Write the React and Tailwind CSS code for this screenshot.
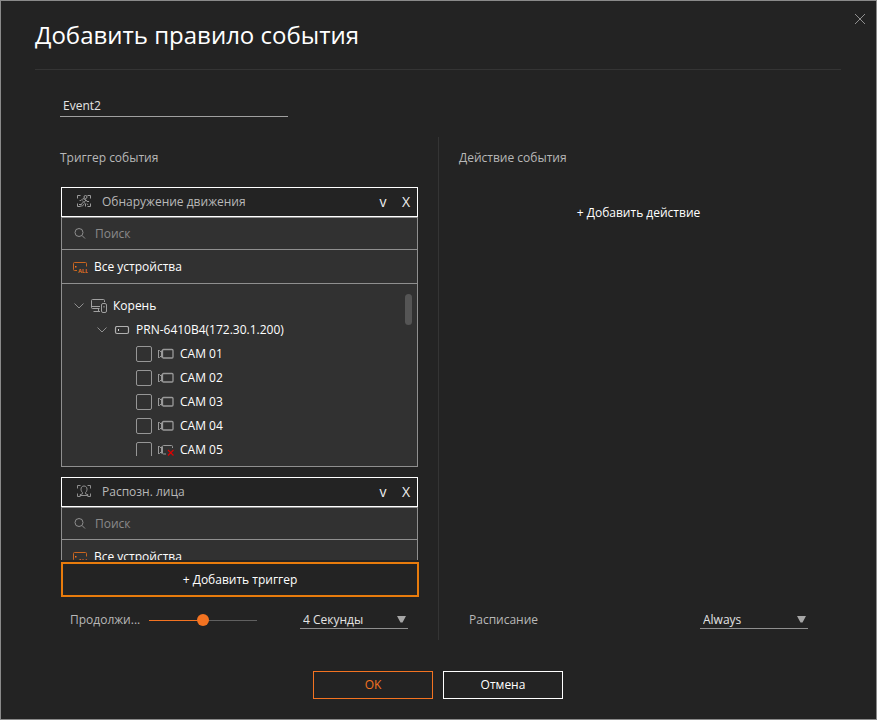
import { useState } from "react";

function CornerFrame() {
  return (
    <path d="M1.5 4.5v-3h3M11.5 1.5h3v3M14.5 9.5v3h-3M4.5 12.5h-3v-3" />
  );
}

function MotionIcon() {
  return (
    <svg className="mb-[2px] h-[14px] w-4 shrink-0" viewBox="0 0 16 14" fill="none" stroke="#9c9c9c" aria-hidden="true">
      <CornerFrame />
      <circle cx="9.500" cy="3" r="1.500" />
      <path d="M5 6.500L7 4.500l3 1.500-2 2.500 1.500 1.500v2.500M6.500 8.500L5.500 10.500H3M10 6l1 1.500h2" />
      <path d="M3.500 6.500h1.500M6.500 6.500L8 8.500M4 12h2.500l1.500-2M11 9.500l1 1.500" strokeWidth="0.8" />
    </svg>
  );
}

function FaceIcon() {
  return (
    <svg className="mb-[2px] h-[14px] w-4 shrink-0" viewBox="0 0 16 14" fill="none" stroke="#8f8f8f" aria-hidden="true">
      <CornerFrame />
      <path d="M6.5 8.6C5.4 7.6 5 6.400 5 5.200 5 3.200 6.200 2 8 2s3 1.200 3 3.200c0 1.200-.4 2.400-1.500 3.400v1.200l2.500.9v.8H4v-.8l2.500-.9z" />
    </svg>
  );
}

function SearchIcon() {
  return (
    <svg className="h-3 w-3 shrink-0" viewBox="0 0 12 12" fill="none" stroke="#8f8f8f" aria-hidden="true">
      <circle cx="5" cy="4.500" r="4" />
      <path d="M8 7.500l3 3" />
    </svg>
  );
}

function AllDevicesIcon() {
  return (
    <svg className="h-3 w-4 shrink-0" viewBox="0 0 16 12" fill="none" stroke="#c9651f" aria-hidden="true">
      <path d="M5 9.500H2.500a1 1 0 0 1-1-1v-6a1 1 0 0 1 1-1h11a1 1 0 0 1 1 1v3" />
      <rect x="3" y="5" width="1.500" height="1.500" fill="#f37321" stroke="none" />
      <text x="6" y="11.500" fontSize="5.500" fontWeight="700" fontFamily="Liberation Sans, sans-serif" fill="#ea7323" stroke="none">
        ALL
      </text>
    </svg>
  );
}

function ChevronIcon() {
  return (
    <svg className="h-2 w-3 shrink-0" viewBox="0 0 12 8" fill="none" stroke="#8f8f8f" aria-hidden="true">
      <path d="M1.500 1.500L6 6l4.500-4.500" />
    </svg>
  );
}

function RootIcon() {
  return (
    <svg className="h-4 w-4 shrink-0" viewBox="0 0 16 16" fill="none" stroke="#a0a0a0" aria-hidden="true">
      <path d="M8.500 10.500H1.500a1 1 0 0 1-1-1v-7a1 1 0 0 1 1-1h11a1 1 0 0 1 1 1v1.500" />
      <path d="M1 8.500h8" />
      <path d="M7.500 10.500v3M2.500 13.500h6.500" />
      <rect x="10.500" y="5.500" width="5" height="9" rx="1.500" />
      <path d="M13 8v1.500" />
    </svg>
  );
}

function RecorderIcon() {
  return (
    <svg className="h-[9px] w-4 shrink-0" viewBox="0 0 16 9" fill="none" stroke="#b0b0b0" aria-hidden="true">
      <rect x="1.500" y="0.500" width="13" height="7" rx="1.500" strokeWidth="1.200" />
      <rect x="4" y="3" width="1" height="2" fill="#d0d0d0" stroke="none" />
    </svg>
  );
}

function CameraIcon({ offline }) {
  return (
    <svg className="h-3 w-4 shrink-0" viewBox="0 0 16 12" fill="none" stroke="#999999" aria-hidden="true">
      <path d="M0.500 2v8M0.500 2.500h1l2 2v3l-2 2h-1M3.500 2.500v7" />
      {offline ? (
        <>
          <path d="M14.500 4V2.500a1 1 0 0 0-1-1h-8a1 1 0 0 0-1 1v6.500a1 1 0 0 0 1 1H8" />
          <path d="M10 6l5.500 5.500M15.500 6L10 11.500" stroke="#e00000" strokeWidth="1.200" />
        </>
      ) : (
        <rect x="4.500" y="1.500" width="10.500" height="8.500" rx="1" strokeWidth="1.300" />
      )}
    </svg>
  );
}

const cameras = [
  { name: "CAM 01" },
  { name: "CAM 02" },
  { name: "CAM 03" },
  { name: "CAM 04" },
  { name: "CAM 05", offline: true },
];

function CameraRow({ camera }) {
  return (
    <li>
      <label className="flex h-6 items-center pl-[74px]">
        <input
          type="checkbox"
          className="h-4 w-4 shrink-0 appearance-none rounded-[2px] border border-[#969696] checked:bg-[#f37321]"
        />
        <span className="ml-[6px] mr-[6px] flex">
          <CameraIcon offline={camera.offline} />
        </span>
        {camera.name}
      </label>
    </li>
  );
}

function TriggerCard({ title, icon }) {
  return (
    <section>
      <header className="flex h-[30px] items-center border border-white pl-[14px]">
        {icon}
        <h3 className="ml-[10px] flex-1 text-[#b8b8b8]">{title}</h3>
        <button type="button" className="w-6 text-sm text-[#f0f0f0]" aria-label={`Свернуть: ${title}`}>
          v
        </button>
        <button type="button" className="w-[22px] text-sm text-[#f0f0f0]" aria-label={`Удалить: ${title}`}>
          X
        </button>
      </header>
      <div className="border border-[#8f8f8f] bg-[#313131]">
        <label className="flex h-8 items-center border-b border-[#8f8f8f] pl-3">
          <SearchIcon />
          <input
            type="search"
            placeholder="Поиск"
            aria-label="Поиск"
            className="ml-[9px] min-w-0 flex-1 bg-transparent text-[#e0e0e0] outline-none placeholder:text-[#8a8a8a]"
          />
        </label>
        <button
          type="button"
          className="flex h-[34px] w-full items-center gap-[6px] border-b border-[#8f8f8f] pl-[10px] text-left text-white"
        >
          <AllDevicesIcon />
          Все устройства
        </button>
        <div className="flex py-[10px] pr-[5px]">
          <ul className="h-[162px] flex-1 overflow-y-auto text-white [scrollbar-width:none]">
            <li className="flex h-6 items-center pl-[11px]">
              <ChevronIcon />
              <span className="ml-[6px] mr-[6px] flex">
                <RootIcon />
              </span>
              Корень
            </li>
            <li className="flex h-6 items-center pl-[34px]">
              <ChevronIcon />
              <span className="ml-[6px] mr-[6px] flex">
                <RecorderIcon />
              </span>
              PRN-6410B4(172.30.1.200)
            </li>
            {cameras.map((camera) => (
              <CameraRow key={camera.name} camera={camera} />
            ))}
          </ul>
          <div className="h-[31px] w-[7px] rounded-full bg-[#555555]" />
        </div>
      </div>
    </section>
  );
}

function UnderlinedSelect({ id, options, label }) {
  return (
    <div className="grid w-[108px] items-start border-b border-[#8f8f8f]">
      <select
        id={id}
        aria-label={label}
        className="col-start-1 row-start-1 h-4 w-full appearance-none bg-transparent pl-[3px] text-[#e4e4e4] outline-none"
      >
        {options.map((option) => (
          <option key={option} className="bg-[#313131]">
            {option}
          </option>
        ))}
      </select>
      <svg
        className="pointer-events-none col-start-1 row-start-1 mr-[2px] mt-1 h-[7px] w-[9px] justify-self-end"
        viewBox="0 0 9 7"
        fill="#a6a6a6"
        aria-hidden="true"
      >
        <path d="M0 0h9L5.500 6.500h-2z" />
      </svg>
    </div>
  );
}

export default function App() {
  const [name, setName] = useState("Event2");
  const [duration, setDuration] = useState(50);

  return (
    <div className="flex h-screen min-h-[480px] flex-col border border-[#8a8a8a] bg-[#232323] font-['Open_Sans','Noto_Sans',sans-serif] text-xs">
      <header className="flex items-start">
        <div className="ml-[34px] h-[69px] flex-1 border-b border-[#343434] pt-4">
          <h1 className="text-2xl leading-9 text-white">Добавить правило события</h1>
        </div>
        <button type="button" aria-label="Закрыть" className="ml-3 mr-[9px] mt-[11px] p-[1px]">
          <svg className="h-3 w-3" viewBox="0 0 12 12" fill="none" stroke="#909090" aria-hidden="true">
            <path d="M1 1l10 10M11 1L1 11" />
          </svg>
        </button>
      </header>

      <input
        type="text"
        aria-label="Имя правила"
        value={name}
        onChange={(event) => setName(event.target.value)}
        className="ml-[59px] mt-[25px] h-[22px] w-[228px] shrink-0 border-b border-[#a0a0a0] bg-transparent pl-[3px] text-[#e4e4e4] outline-none"
      />

      <main className="mt-5 grid min-h-0 flex-1 grid-cols-2 grid-rows-[minmax(0,1fr)] pr-px">
        <section className="flex min-h-0 flex-col pb-[10px] pl-[59px] pr-[19px] pt-[11px]">
          <h2 className="leading-5 text-[#b8b8b8]">Триггер события</h2>
          <div className="ml-px mr-px mt-[19px] flex min-h-0 flex-1 flex-col gap-[10px] overflow-y-auto [scrollbar-width:none]">
            <TriggerCard title="Обнаружение движения" icon={<MotionIcon />} />
            <TriggerCard title="Распозн. лица" icon={<FaceIcon />} />
          </div>
          <button
            type="button"
            className="ml-px mt-[2px] h-[35px] shrink-0 border-2 border-[#e87b0c] text-white"
          >
            + Добавить триггер
          </button>
          <div className="mt-[13px] flex h-5 items-center pl-[10px] pr-[11px]">
            <label htmlFor="duration" className="w-[79px] text-[#b8b8b8]">
              Продолжи...
            </label>
            <input
              id="duration"
              type="range"
              value={duration}
              onChange={(event) => setDuration(Number(event.target.value))}
              className="h-3 w-[108px] appearance-none bg-transparent [&::-webkit-slider-runnable-track]:h-px [&::-webkit-slider-runnable-track]:bg-[linear-gradient(to_right,#f37321_50%,#606060_50%)] [&::-webkit-slider-thumb]:-mt-[6px] [&::-webkit-slider-thumb]:h-3 [&::-webkit-slider-thumb]:w-3 [&::-webkit-slider-thumb]:appearance-none [&::-webkit-slider-thumb]:rounded-full [&::-webkit-slider-thumb]:bg-[#f37321]"
            />
            <div className="ml-auto">
              <UnderlinedSelect id="duration-unit" label="Продолжительность" options={["4 Секунды", "5 Секунды"]} />
            </div>
          </div>
        </section>

        <section className="flex min-h-0 flex-col border-l border-[#343434] pb-[10px] pl-5 pr-[57px] pt-[11px]">
          <h2 className="leading-5 text-[#b8b8b8]">Действие события</h2>
          <button type="button" className="mt-[35px] h-5 self-center text-white">
            + Добавить действие
          </button>
          <div className="mt-auto flex h-5 items-center justify-between px-[10px]">
            <label htmlFor="schedule" className="text-[#b8b8b8]">
              Расписание
            </label>
            <UnderlinedSelect id="schedule" label="Расписание" options={["Always"]} />
          </div>
        </section>
      </main>

      <footer className="mb-5 mt-[31px] flex justify-center gap-[10px] pr-px">
        <button type="button" className="h-7 w-[120px] border border-[#f37321] text-[#f37321]">
          OK
        </button>
        <button type="button" className="h-7 w-[120px] border border-white text-white">
          Отмена
        </button>
      </footer>
    </div>
  );
}
